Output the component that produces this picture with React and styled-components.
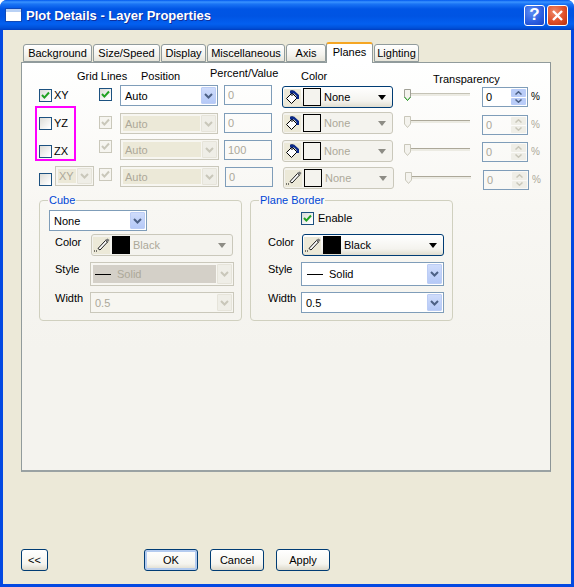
import React from "react";
import styled, { createGlobalStyle } from "styled-components";

const Global = createGlobalStyle`
  html, body { margin: 0; padding: 0; background: #fff; }
  * { box-sizing: border-box; }
  body { font-family: "Liberation Sans", Arial, sans-serif; font-size: 11px; color: #000; }
`;

const Window = styled.div`
  width: 574px; height: 587px; display: flex; flex-direction: column;
  background: #0349e2; border-radius: 7px 7px 0 0; overflow: hidden;
`;
const TitleBar = styled.div`
  height: 30px; flex: none; display: flex; align-items: center; padding: 0 6px 0 6px;
  background: linear-gradient(180deg, #0058ee 0, #3a93ff 2px, #1a74f5 4px, #0055e5 9px, #0054e3 16px, #0360f0 24px, #0050d8 28px, #003dc0 30px);
`;
const TitleIcon = styled.div`
  width: 15px; height: 12px; margin-right: 5px; background: #fff;
  border-top: 3px solid #b9d1f5; box-shadow: 0 0 0 1px #0f49b8;
`;
const TitleText = styled.div`
  flex: 1; color: #fff; font-weight: 700; font-size: 13px; text-shadow: 1px 1px 0 #0f2f9c;
`;
const CapBtn = styled.div`
  width: 21px; height: 21px; margin-left: 2px; border: 1px solid #fff; border-radius: 3px;
  display: flex; align-items: center; justify-content: center; color: #fff;
  font: 700 17px "Liberation Sans", sans-serif;
  background: ${p => p.$red
    ? "radial-gradient(circle at 35% 30%, #ee8a6a 0, #df4f28 55%, #b8300f 100%)"
    : "radial-gradient(circle at 35% 30%, #5f8ef2 0, #2a5de0 60%, #1a45c4 100%)"};
`;
const Client = styled.div`
  height: 554px; flex: none; margin: 0 3px; padding: 12px 0 0 18px; background: #ece9d8;
`;
const TabStrip = styled.div`
  display: flex; gap: 1px; padding-left: 2px; height: 20px; align-items: flex-start; position: relative; z-index: 1;
`;
const Tab = styled.div`
  width: ${p => p.$w}px; height: ${p => (p.$active ? 21 : 18)}px; margin-top: ${p => (p.$active ? 0 : 2)}px;
  margin-left: ${p => (p.$active ? -1 : 0)}px;
  border: 1px solid #919b9c; border-bottom: ${p => (p.$active ? "none" : "1px solid #919b9c")};
  border-radius: 3px 3px 0 0; text-align: center; line-height: 17px; font-size: 11px;
  ${p => p.$active
    ? "background:#fff; border-top:2px solid #f5a623;"
    : "background:linear-gradient(180deg,#fff 0,#f4f3ee 60%,#e6e4d9 100%);"}
`;
const Panel = styled.div`
  position: relative; width: 530px; height: 410px; border: 1px solid #919b9c;
  border-right-color: #8c9596; border-bottom: 2px solid #9aa2a3;
  background: linear-gradient(180deg, #fff 0, #f8f7f3 35%, #f4f3ee 70%);
`;
const Highlight = styled.div`
  position: absolute; left: 13px; top: 43px; width: 41px; height: 55px; border: 2px solid #ff00ff;
`;
const HeaderRow = styled.div`
  display: grid; grid-template-columns: 64px 69px 91px 132px auto; height: 22px; padding-left: 55px;
`;
const HeaderLabel = styled.div`
  margin-top: ${p => p.$t}px; line-height: 13px; white-space: nowrap;
`;
const PlaneRow = styled.div`
  display: grid; height: 27px; padding-left: 17px; align-items: start;
  grid-template-columns: 60px 21px ${p => (p.$last ? 105 : 104)}px 58px 122px 78px auto;
`;
const Cell = styled.div`
  display: flex; align-items: center; margin-top: ${p => p.$t || 0}px;
`;
const CheckBox = styled.div`
  width: 13px; height: 13px; flex: none; display: flex; align-items: center; justify-content: center;
  border: 1px solid ${p => (p.$off ? "#cac8bb" : "#1c5180")};
  background: ${p => (p.$off ? "#f6f5f0" : "linear-gradient(135deg,#dcdcd7 0,#fff 90%)")};
`;
const CheckLabel = styled.span`
  margin-left: ${p => p.$gap ?? 2}px; font-size: 11px; line-height: 13px;
`;
const ComboBox = styled.div`
  width: ${p => p.$w}px; height: ${p => p.$h || 21}px; flex: none; display: flex; align-items: stretch; padding: 1px;
  border: ${p => (p.$off ? "1px solid #cac8bb" : "1px solid #7f9db9")};
  background: ${p => (p.$off ? "#f7f6f1" : "#fff")};
  color: ${p => (p.$off ? "#aca899" : "#000")};
`;
const ComboText = styled.div`
  flex: 1; min-width: 0; display: flex; align-items: center; padding-left: ${p => p.$pad ?? 2}px; margin: ${p => (p.$fill ? 1 : 0)}px 1px; white-space: nowrap;
  background: ${p => p.$fill || "transparent"}; font-size: 11px;
`;
const ArrowBtn = styled.div`
  width: 15px; flex: none; display: flex; align-items: center; justify-content: center; border-radius: 1px;
  background: ${p => (p.$off ? "#efeee7" : "linear-gradient(180deg,#cfdcfb 0,#b5c9f7 100%)")};
  border: 1px solid ${p => (p.$off ? "#e6e4da" : "#bccdf5")};
`;
const TextBox = styled.div`
  width: 48px; height: 20px; border: 1px solid #7f9db9; color: #aca899; padding-left: 3px; line-height: 18px; font-size: 11px;
`;
const ColorBtn = styled.div`
  width: ${p => p.$w}px; height: 22px; flex: none; display: flex; align-items: center; padding-left: 1px;
  border-radius: 3px; border: 1px solid ${p => (p.$off ? "#cac8bb" : "#003c74")};
  background: ${p => (p.$off ? "#f4f3ee" : "linear-gradient(180deg,#fff 0,#f4f3ee 70%,#e0ddcf 100%)")};
  color: ${p => (p.$off ? "#aca899" : "#000")}; font-size: 11px;
`;
const ToolIcon = styled.div`
  width: 17px; height: 17px; flex: none; background: #ece9d8; display: flex; align-items: center; justify-content: center;
`;
const Swatch = styled.div`
  width: 18px; height: 18px; flex: none; margin: 0 3px 0 2px; border: 1px solid #000;
  background: ${p => p.$c};
`;
const ColorName = styled.div`flex: 1;`;
const DropArrow = styled.div`
  width: 0; height: 0; margin-right: 6px; border-style: solid; border-width: 5px 4px 0 4px;
  border-color: ${p => (p.$off ? "#8d8c85" : "#000")} transparent transparent transparent;
`;
const Slider = styled.div`
  position: relative; width: 66px; height: 12px;
`;
const Track = styled.div`
  position: absolute; left: 0; right: 0; top: 4px; height: 3px;
  border-top: 1px solid ${p => (p.$off ? "#aca899" : "#c5c3b6")}; background: #ecebe3;
`;
const Thumb = styled.svg`
  position: absolute; left: 0; top: 0;
`;
const SpinBox = styled.div`
  width: 46px; height: 20px; display: flex; padding: 1px; border: 1px solid #7f9db9;
  background: ${p => (p.$off ? "transparent" : "#fff")}; color: ${p => (p.$off ? "#aca899" : "#000")};
  font-size: 11px;
`;
const SpinText = styled.div`flex: 1; padding-left: 2px; line-height: 16px;`;
const SpinBtns = styled.div`
  width: 15px; display: flex; flex-direction: column; gap: 1px;
`;
const SpinPart = styled.div`
  flex: 1; display: flex; align-items: center; justify-content: center; border-radius: 1px;
  background: ${p => (p.$off ? "#efeee7" : "#b9ccf8")};
`;
const Percent = styled.span`
  margin: -2px 0 0 3px; color: ${p => (p.$off ? "#aca899" : "#000")}; font-size: 10px;
`;
const Groups = styled.div`
  display: flex; gap: 8px; margin: 7px 0 0 17px;
`;
const Group = styled.div`
  width: 203px; height: 121px; border: 1px solid #d0d0bf; border-radius: 4px;
`;
const Legend = styled.div`
  display: table; height: 13px; line-height: 13px; margin: -7px 0 0 8px; padding: 0 1px;
  color: #0046d5; background: #f9f8f5; font-size: 11px;
`;
const TopSlot = styled.div`
  height: 27px; display: flex; align-items: flex-start; padding: ${p => p.$t}px 0 0 ${p => p.$l}px;
`;
const FormRow = styled.div`
  display: grid; height: ${p => p.$h}px; align-items: start; padding-left: ${p => p.$pad}px;
  grid-template-columns: ${p => p.$label}px auto;
`;
const FormLabel = styled.div`
  margin-top: ${p => p.$t}px; line-height: 13px; font-size: 11px;
`;
const ColorSlot = styled.div`margin-left: 1px;`;
const LineSample = styled.span`
  display: inline-block; width: 16px; height: 1px; background: #000; margin-right: 6px;
`;
const Footer = styled.div`
  display: flex; margin-top: 77px; height: 22px;
`;
const PushBtn = styled.div`
  width: ${p => p.$w}px; height: 22px; margin-left: ${p => p.$ml}px; border: 1px solid #003c74; border-radius: 3px;
  display: flex; align-items: center; justify-content: center; font-size: 11px;
  background: linear-gradient(180deg,#fff 0,#f5f4ee 70%,#dcd8ca 100%);
  ${p => p.$def && "box-shadow: inset 0 0 0 2px #b4cbef;"}
`;

const Chevron = ({ off }) => (
  <svg width="9" height="6" viewBox="0 0 9 6">
    <path d="M1 1l3.5 3.5L8 1" fill="none" stroke={off ? "#c9c7ba" : "#4d6185"} strokeWidth="2" />
  </svg>
);
const SpinUp = ({ off }) => (
  <svg width="7" height="4" viewBox="0 0 7 4">
    <path d="M0.5 3.5L3.5 0.8L6.5 3.5" fill="none" stroke={off ? "#c9c7ba" : "#4d6185"} strokeWidth="1.5" />
  </svg>
);
const SpinDown = ({ off }) => (
  <svg width="7" height="4" viewBox="0 0 7 4">
    <path d="M0.5 0.5L3.5 3.2L6.5 0.5" fill="none" stroke={off ? "#c9c7ba" : "#4d6185"} strokeWidth="1.5" />
  </svg>
);
const Tick = ({ off }) => (
  <svg width="9" height="9" viewBox="0 0 9 9">
    <path d="M1 4l2.4 2.6L8 1.5" fill="none" stroke={off ? "#c9c7ba" : "#21a121"} strokeWidth="2" />
  </svg>
);
const Bucket = () => (
  <svg width="16" height="16" viewBox="0 0 16 16">
    <path d="M7 4L1.5 9.5 6.5 14.5 12 9Z" fill="#fff" stroke="#000" />
    <path d="M7 1V7" stroke="#000" fill="none" />
    <path d="M5 1.5H9L14 6V10H11.5V7L9 4.5H5Z" fill="#0b2a8a" />
  </svg>
);
const Pen = () => (
  <svg width="16" height="16" viewBox="0 0 16 16">
    <path d="M4 11.5L11.5 3.5 13.5 5 6 13Z" fill="#fff" stroke="#000" strokeWidth="0.9" />
    <path d="M11 3l2.5-1.5 2 1.5-1.5 2z" fill="#777" />
    <path d="M0 14h1M2 14h1" stroke="#000" />
  </svg>
);
const ThumbIcon = ({ off }) => (
  <Thumb width="7" height="12" viewBox="0 0 7 12">
    <path d="M0.5 0.5H6.5V8L3.5 11.5 0.5 8Z" fill="#f4f3ee" stroke={off ? "#c9c7ba" : "#a0a096"} />
    {!off && <path d="M0.5 8L3.5 11.5 6.5 8" fill="none" stroke="#21a121" />}
  </Thumb>
);

const Check = ({ on, off }) => <CheckBox $off={off}>{on && <Tick off={off} />}</CheckBox>;
const Combo = ({ w, h, off, fill, pad, children }) => (
  <ComboBox $w={w} $h={h} $off={off}>
    <ComboText $fill={fill} $pad={pad}>{children}</ComboText>
    <ArrowBtn $off={off}><Chevron off={off} /></ArrowBtn>
  </ComboBox>
);
const ColorPick = ({ w, off, icon, color, name }) => (
  <ColorBtn $w={w} $off={off}>
    <ToolIcon>{icon}</ToolIcon>
    <Swatch $c={color} />
    <ColorName>{name}</ColorName>
    <DropArrow $off={off} />
  </ColorBtn>
);
const Spin = ({ off }) => (
  <>
    <SpinBox $off={off}>
      <SpinText>0</SpinText>
      <SpinBtns>
        <SpinPart $off={off}><SpinUp off={off} /></SpinPart>
        <SpinPart $off={off}><SpinDown off={off} /></SpinPart>
      </SpinBtns>
    </SpinBox>
    <Percent $off={off}>%</Percent>
  </>
);

const rows = [
  { label: "XY", on: true, t: [4, 3, 0, 0, 1, 4, 2], pos: "Auto", val: "0", w: 98, tool: <Bucket /> },
  { label: "YZ", off: true, t: [5, 4, 1, 1, 0, 4, 3], pos: "Auto", val: "0", w: 98, tool: <Bucket /> },
  { label: "ZX", off: true, t: [6, 1, 0, 1, 1, 5, 3], pos: "Auto", val: "100", w: 99, tool: <Bucket /> },
  { off: true, last: true, t: [6, 2, 0, 1, 1, 6, 4], pos: "Auto", val: "0", w: 99, tool: <Pen /> },
];
const tabs = [
  ["Background", 69], ["Size/Speed", 67], ["Display", 45], ["Miscellaneous", 78],
  ["Axis", 40], ["Planes", 47, true], ["Lighting", 45],
];

export default function App() {
  return (
    <>
      <Global />
      <Window>
        <TitleBar>
          <TitleIcon />
          <TitleText>Plot Details - Layer Properties</TitleText>
          <CapBtn>?</CapBtn>
          <CapBtn $red>
            <svg width="13" height="13" viewBox="0 0 13 13">
              <path d="M2 2l9 9M11 2l-9 9" stroke="#fff" strokeWidth="2.4" />
            </svg>
          </CapBtn>
        </TitleBar>
        <Client>
          <TabStrip>
            {tabs.map(([t, w, a]) => <Tab key={t} $w={w} $active={a}>{t}</Tab>)}
          </TabStrip>
          <Panel>
            <HeaderRow>
              <HeaderLabel $t={7}>Grid Lines</HeaderLabel>
              <HeaderLabel $t={7}>Position</HeaderLabel>
              <HeaderLabel $t={4}>Percent/Value</HeaderLabel>
              <HeaderLabel $t={7}>Color</HeaderLabel>
              <HeaderLabel $t={10}>Transparency</HeaderLabel>
            </HeaderRow>
            {rows.map((r, i) => (
              <PlaneRow key={i} $last={r.last}>
                <Cell $t={r.last ? 0 : r.t[0]}>
                  {r.last ? (
                    <>
                      <Cell $t={6}><Check /></Cell>
                      <CheckLabel $gap={3} as="div">
                        <Combo w={39} h={20} off fill="#ece9d8" pad={1}>XY</Combo>
                      </CheckLabel>
                    </>
                  ) : (
                    <>
                      <Check on={r.on} />
                      <CheckLabel>{r.label}</CheckLabel>
                    </>
                  )}
                </Cell>
                <Cell $t={r.t[1]}><Check on off={r.off} /></Cell>
                <Cell $t={r.t[2]}>
                  <Combo w={r.w} off={r.off} fill={r.off ? "#ece9d8" : undefined}>{r.pos}</Combo>
                </Cell>
                <Cell $t={r.t[3]}><TextBox>{r.val}</TextBox></Cell>
                <Cell $t={r.t[4]}>
                  <ColorPick w={111} off={r.off} icon={r.tool} color="#f4f3ee" name="None" />
                </Cell>
                <Cell $t={r.t[5]}>
                  <Slider><Track $off={r.off} /><ThumbIcon off={r.off} /></Slider>
                </Cell>
                <Cell $t={r.t[6]}><Spin off={r.off} /></Cell>
              </PlaneRow>
            ))}
            <Groups>
              <Group>
                <Legend>Cube</Legend>
                <TopSlot $t={3} $l={9}><Combo w={98}>None</Combo></TopSlot>
                <FormRow $h={28} $pad={15} $label={35}>
                  <FormLabel $t={2}>Color</FormLabel>
                  <ColorSlot><ColorPick w={142} off icon={<Pen />} color="#000" name="Black" /></ColorSlot>
                </FormRow>
                <FormRow $h={30} $pad={15} $label={35}>
                  <FormLabel $t={1}>Style</FormLabel>
                  <Combo w={144} h={24} off fill="#d4d0c8" pad={2}><LineSample />Solid</Combo>
                </FormRow>
                <FormRow $h={22} $pad={15} $label={35}>
                  <FormLabel>Width</FormLabel>
                  <Combo w={144} off>0.5</Combo>
                </FormRow>
              </Group>
              <Group>
                <Legend>Plane Border</Legend>
                <TopSlot $t={5} $l={50}>
                  <Check on /><CheckLabel $gap={4}>Enable</CheckLabel>
                </TopSlot>
                <FormRow $h={28} $pad={17} $label={33}>
                  <FormLabel $t={2}>Color</FormLabel>
                  <ColorSlot><ColorPick w={142} icon={<Pen />} color="#000" name="Black" /></ColorSlot>
                </FormRow>
                <FormRow $h={30} $pad={17} $label={33}>
                  <FormLabel $t={1}>Style</FormLabel>
                  <Combo w={143} h={24} pad={3}><LineSample />Solid</Combo>
                </FormRow>
                <FormRow $h={22} $pad={17} $label={33}>
                  <FormLabel>Width</FormLabel>
                  <Combo w={143}>0.5</Combo>
                </FormRow>
              </Group>
            </Groups>
            <Highlight />
          </Panel>
          <Footer>
            <PushBtn $w={27} $ml={0}>&lt;&lt;</PushBtn>
            <PushBtn $w={54} $ml={96} $def>OK</PushBtn>
            <PushBtn $w={54} $ml={12}>Cancel</PushBtn>
            <PushBtn $w={54} $ml={12}>Apply</PushBtn>
          </Footer>
        </Client>
      </Window>
    </>
  );
}
